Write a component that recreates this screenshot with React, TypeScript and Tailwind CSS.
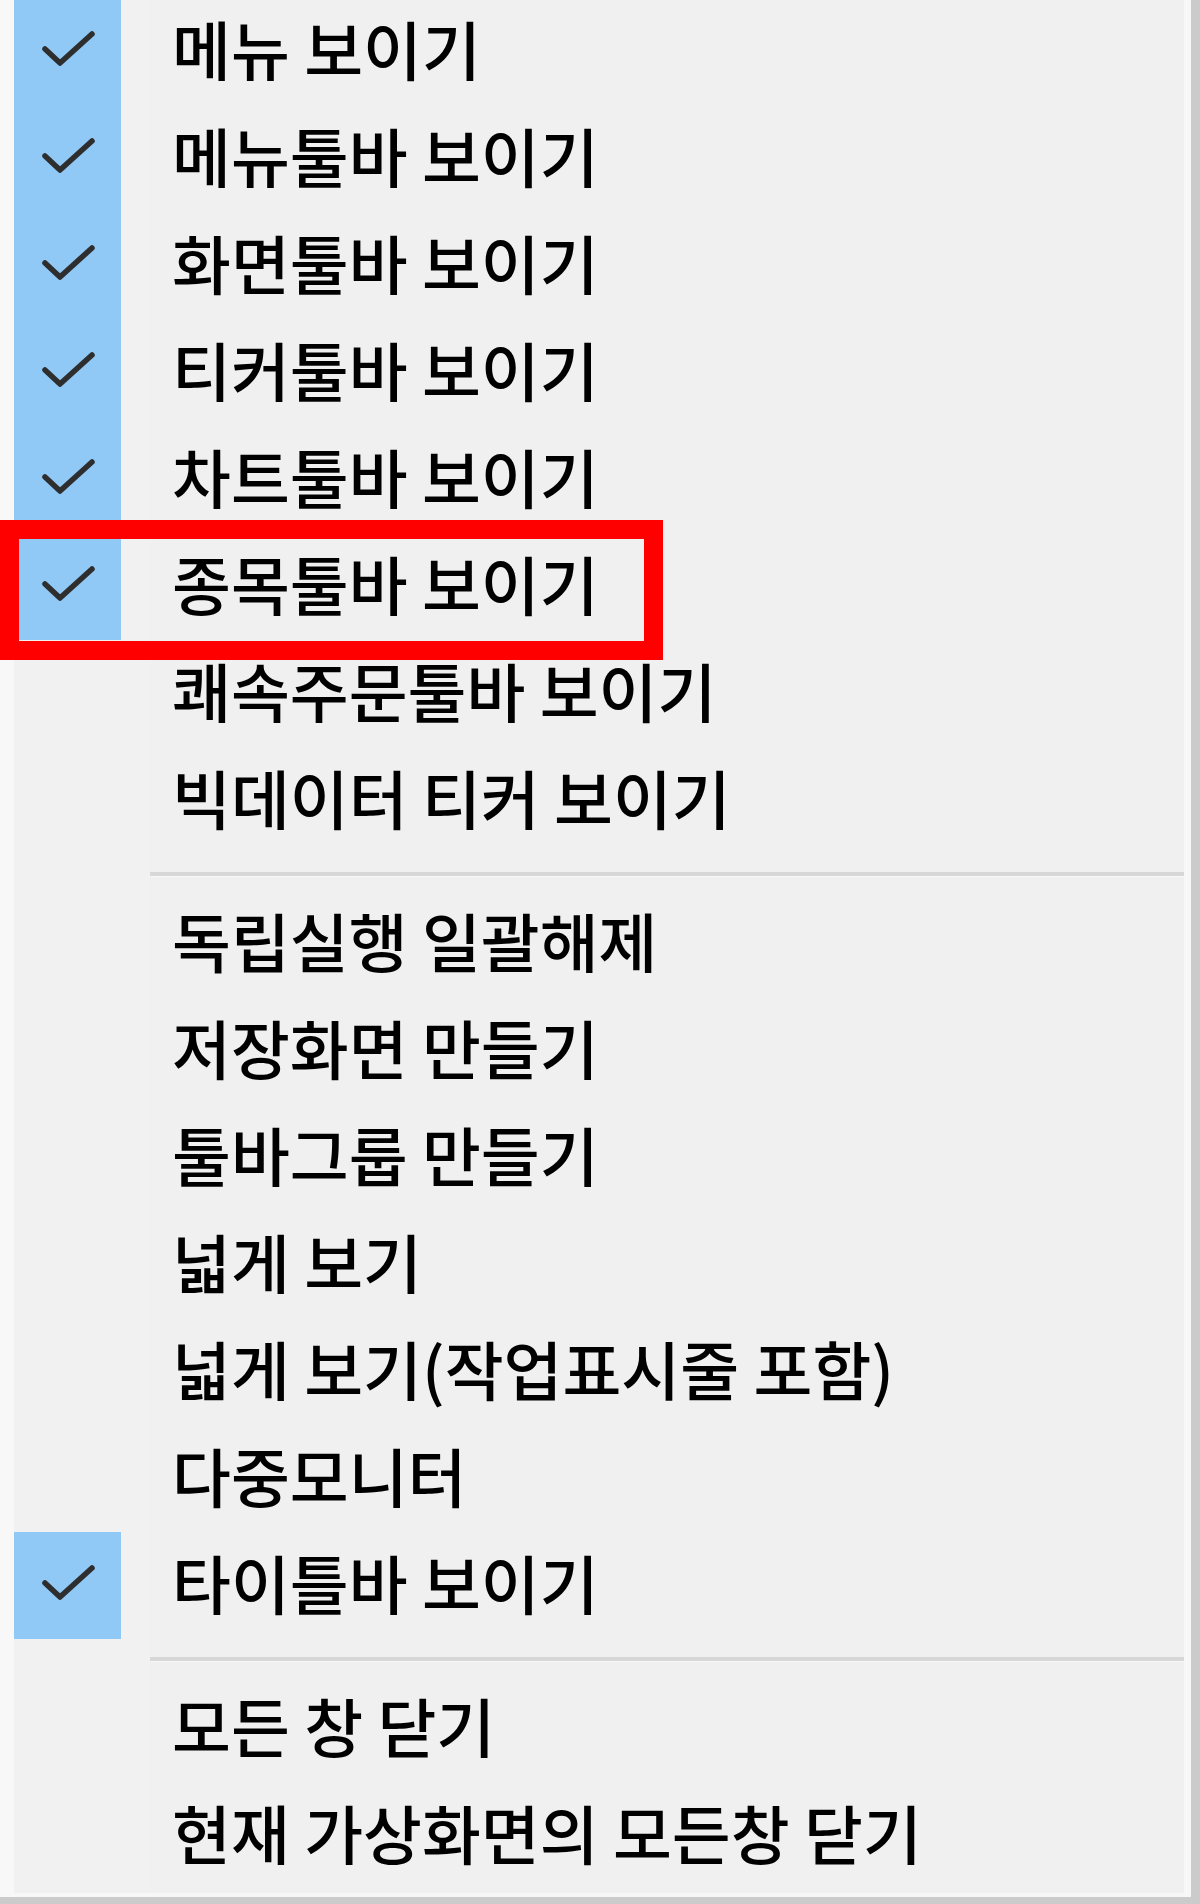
import React from "react";

type Item = { label: string; checked?: boolean; boxed?: boolean };

const groups: Item[][] = [
  [
    { label: "메뉴 보이기", checked: true },
    { label: "메뉴툴바 보이기", checked: true },
    { label: "화면툴바 보이기", checked: true },
    { label: "티커툴바 보이기", checked: true },
    { label: "차트툴바 보이기", checked: true },
    { label: "종목툴바 보이기", checked: true, boxed: true },
    { label: "쾌속주문툴바 보이기" },
    { label: "빅데이터 티커 보이기" },
  ],
  [
    { label: "독립실행 일괄해제" },
    { label: "저장화면 만들기" },
    { label: "툴바그룹 만들기" },
    { label: "넓게 보기" },
    { label: "넓게 보기(작업표시줄 포함)" },
    { label: "다중모니터" },
    { label: "타이틀바 보이기", checked: true },
  ],
  [{ label: "모든 창 닫기" }, { label: "현재 가상화면의 모든창 닫기" }],
];

function Check() {
  return (
    <svg width="107" height="107" viewBox="0 0 107 107" fill="none">
      <path
        d="M31 51 L46 65 L78 36"
        stroke="#2e2e2e"
        strokeWidth="5.5"
        strokeLinecap="round"
        strokeLinejoin="round"
      />
    </svg>
  );
}

function Row({ item }: { item: Item }) {
  return (
    <div className="relative flex h-[107px] items-center">
      <div className="flex h-full w-[136px] shrink-0 bg-[#f1f1f1]">
        <div className={item.checked ? "h-full w-[107px] bg-[#90c8f6]" : "h-full w-[107px]"}>
          {item.checked && <Check />}
        </div>
      </div>
      <span className="whitespace-nowrap pb-[10px] pl-[22px] text-[64px] font-medium leading-none text-black">
        {item.label}
      </span>
      {/* 강조 표시 */}
      {item.boxed && (
        <div className="pointer-events-none absolute left-[-14px] top-[-13px] z-10 h-[140px] w-[663px] border-[19px] border-[#ff0000]" />
      )}
    </div>
  );
}

function Separator() {
  return (
    <div className="flex h-[36px]">
      <div className="h-full w-[136px] shrink-0 bg-[#f1f1f1]" />
      <div className="flex-1 pt-[18px]">
        <div className="h-[4px] w-[1034px] bg-[#d7d7d7]" />
        <div className="h-[1px] w-[1034px] bg-[#f8f8f8]" />
      </div>
    </div>
  );
}

export default function App() {
  return (
    <div
      className="h-[1904px] w-[1200px] overflow-hidden bg-white"
      style={{ fontFamily: '"Noto Sans CJK KR", "Noto Sans", sans-serif' }}
    >
      <div className="flex h-full w-full border-b-[7px] border-r-[9px] border-[#cbcbcb] bg-[#f0f0f0]">
        <div className="h-full w-[14px] shrink-0 bg-[#f8f8f8]" />
        <div className="flex flex-1 flex-col border-b-[4px] border-r-[7px] border-[#f7f7f7]">
          <div className="mt-[-2px] flex flex-col">
            {groups.map((g, gi) => (
              <React.Fragment key={gi}>
                {gi > 0 && <Separator />}
                {g.map((item) => (
                  <Row key={item.label} item={item} />
                ))}
              </React.Fragment>
            ))}
          </div>
        </div>
      </div>
    </div>
  );
}
